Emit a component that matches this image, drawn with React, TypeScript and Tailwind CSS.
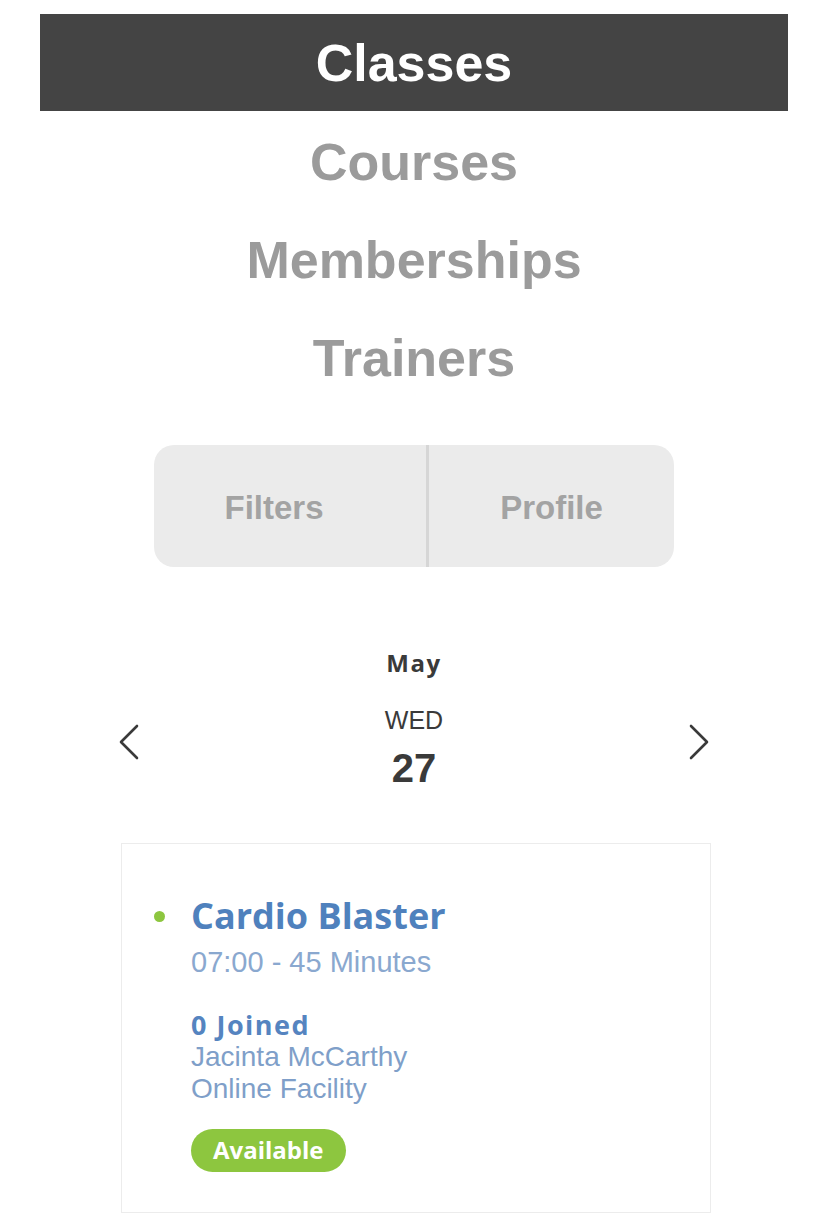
const navItems = ["Courses", "Memberships", "Trainers"];

function Chevron({ dir }: { dir: "left" | "right" }) {
  return (
    <svg width="22" height="36" viewBox="0 0 22 36" fill="none" className="mt-[19px] text-[#3a3a3a]">
      <path
        d={dir === "left" ? "M19 2 L3 18 L19 34" : "M3 2 L19 18 L3 34"}
        stroke="currentColor"
        strokeWidth="2.6"
        strokeLinecap="round"
        strokeLinejoin="round"
      />
    </svg>
  );
}

export default function App() {
  return (
    <div className="min-h-screen bg-white pt-[14px] font-['Liberation_Sans',Arial,sans-serif]">
      {/* Top tabs */}
      <div className="mx-[40px] flex h-[97px] items-center justify-center bg-[#444444]">
        <span className="text-[52px] font-bold text-white">Classes</span>
      </div>
      {navItems.map((item) => (
        <div key={item} className="flex h-[98px] items-center justify-center pt-[4px]">
          <span className="text-[52px] font-bold text-[#9b9b9b]">{item}</span>
        </div>
      ))}

      {/* Filters / Profile */}
      <div className="mx-auto mt-[40px] flex h-[122px] w-[520px] overflow-hidden rounded-[20px] bg-[#ebebeb]">
        <button className="flex w-[272px] items-center justify-center pr-[32px] pt-[4px] text-[33px] font-bold text-[#a3a3a3]">
          Filters
        </button>
        <div className="w-[3px] bg-[#d6d6d6]" />
        <button className="flex flex-1 items-center justify-center pt-[4px] text-[33px] font-bold text-[#a3a3a3]">
          Profile
        </button>
      </div>

      {/* Date picker */}
      <div className="mt-[78px] text-center font-['Open_Sans',sans-serif] text-[24px] font-bold tracking-[1.5px] text-[#3a3a3a]">
        May
      </div>
      <div className="mx-auto mt-[24px] flex w-[592px] items-start justify-between">
        <Chevron dir="left" />
        <div className="flex flex-col items-center text-[#3a3a3a]">
          <span className="text-[25px] leading-[30px]">WED</span>
          <span className="mt-[10px] text-[40px] font-bold leading-[46px]">27</span>
        </div>
        <Chevron dir="right" />
      </div>

      {/* Class card */}
      <div className="mx-auto mt-[52px] w-[590px] translate-x-[2px] border border-[#ececec] bg-white pb-[40px] pl-[32px] pt-[47px]">
        <div className="flex items-center gap-[26px]">
          <span className="h-[11px] w-[11px] rounded-full bg-[#8dc63f]" />
          <span className="font-['Open_Sans',sans-serif] text-[36px] font-bold leading-[50px] text-[#4f81bd]">
            Cardio Blaster
          </span>
        </div>
        <div className="pl-[37px]">
          <div className="text-[29px] text-[#8aa8cf]">07:00 - 45 Minutes</div>
          <div className="mt-[24px] font-['Open_Sans',sans-serif] text-[27px] font-bold leading-[32px] tracking-[1.5px] text-[#5584c0]">
            0 Joined
          </div>
          <div className="text-[28px] leading-[32px] text-[#7f9fc9]">Jacinta McCarthy</div>
          <div className="text-[28px] leading-[32px] text-[#7f9fc9]">Online Facility</div>
          <div className="mt-[24px] inline-flex h-[43px] items-center rounded-full bg-[#8dc63f] px-[22px] font-['Open_Sans',sans-serif] text-[24px] font-bold text-white">
            Available
          </div>
        </div>
      </div>
    </div>
  );
}
